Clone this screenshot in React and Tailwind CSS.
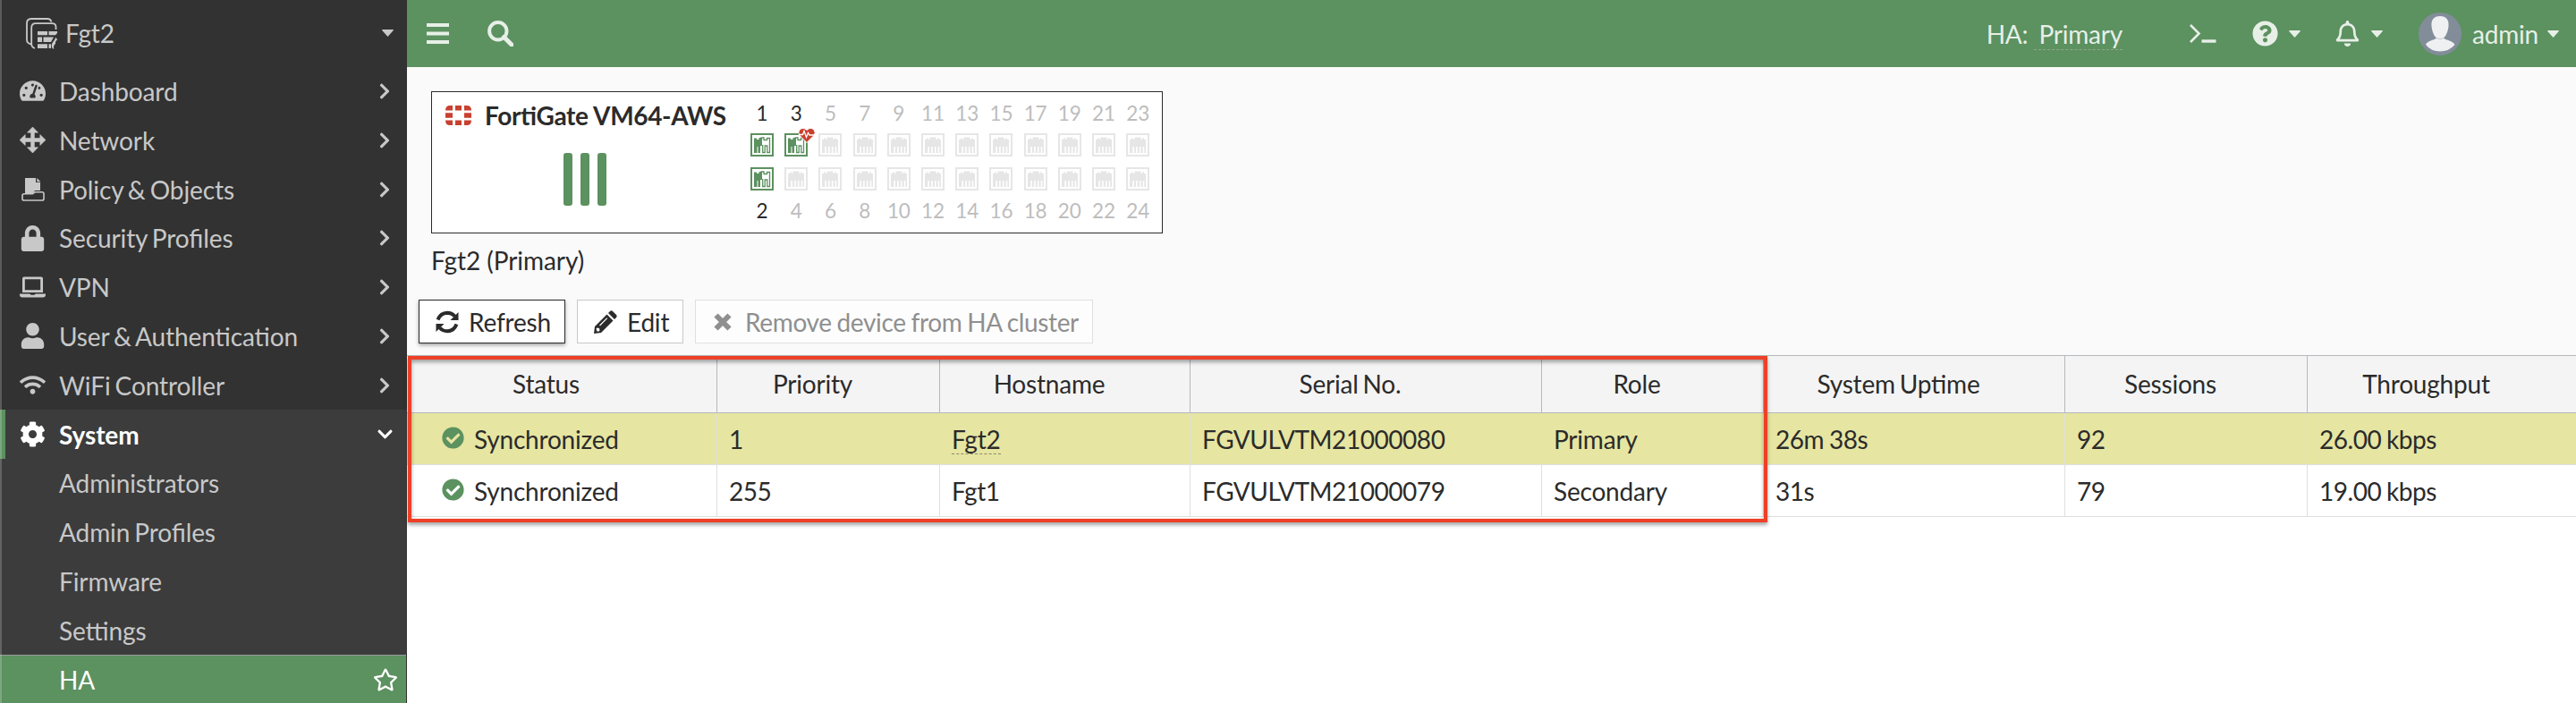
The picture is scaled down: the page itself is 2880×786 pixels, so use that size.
import { FaTachometerAlt, FaLock, FaUser, FaWifi, FaCog, FaRegStar, FaRegBell, FaQuestionCircle, FaCheckCircle, FaChevronRight, FaChevronDown } from "react-icons/fa";

const navItems = [
  { label: "Dashboard", icon: <FaTachometerAlt className="size-[29px]" /> },
  { label: "Network", icon: <MoveIcon /> },
  { label: "Policy & Objects", icon: <PolicyIcon /> },
  { label: "Security Profiles", icon: <FaLock className="size-[29px]" /> },
  { label: "VPN", icon: <LaptopIcon /> },
  { label: "User & Authentication", icon: <FaUser className="size-[29px]" /> },
  { label: "WiFi Controller", icon: <FaWifi className="size-[29px]" /> },
];

const subItems = ["Administrators", "Admin Profiles", "Firmware", "Settings"];

const odd = [1, 3, 5, 7, 9, 11, 13, 15, 17, 19, 21, 23];

function Caret({ className }) {
  return (
    <svg viewBox="0 0 13 8" className={className} fill="currentColor">
      <path d="M.5 0H12.500L13 .8 6.500 8 0 .8Z" />
    </svg>
  );
}

function MoveIcon() {
  return (
    <svg viewBox="0 0 29 29" className="size-[29px]" fill="currentColor">
      <path d="M14.5 0 20.5 6.2H16.400V12.600H22.800V8.500L29 14.500 22.800 20.500V16.400H16.400V22.800H20.500L14.500 29 8.500 22.800H12.600V16.400H6.200V20.500L0 14.500 6.200 8.500V12.600H12.600V6.200H8.500Z" stroke="currentColor" strokeLinejoin="round" strokeWidth="0.600" />
    </svg>
  );
}

function PolicyIcon() {
  return (
    <svg viewBox="0 0 26 26" className="h-[26px] w-[26px]">
      <path d="M4 0H16V5H21V14H15L13 17H4Z" fill="currentColor" />
      <path d="M17.300 0 21.500 4.200H17.300Z" fill="currentColor" />
      <path d="M3 17.800H12.500L15 15.800H23Q25 15.800 25 17.800V23.200Q25 25 23 25H3Q1 25 1 23.200V19.500Q1 17.800 3 17.800Z" fill="none" stroke="currentColor" strokeWidth="1.600" />
    </svg>
  );
}

function LaptopIcon() {
  return (
    <svg viewBox="0 0 29 24" className="h-[24px] w-[29px]" fill="currentColor">
      <path fillRule="evenodd" d="M5 .5H24Q26 .5 26 2.500V18H3V2.500Q3 .5 5 .5ZM5.800 3.300V15.300H23.200V3.300Z" />
      <path d="M0 19.500H11.500Q12 20.800 13 20.800H16Q17 20.800 17.500 19.500H29V20.500Q29 23.500 26 23.500H3Q0 23.500 0 20.500Z" />
    </svg>
  );
}

function DeviceIcon() {
  return (
    <svg viewBox="0 0 36 35" className="h-[35px] w-[36px]">
      <g fill="none" stroke="currentColor" strokeWidth="1.800">
        <path d="M6 29.500Q1 28.500 1 24.500V6Q1 1 6 1H24Q27.500 1 28.500 4.500" />
        <path d="M10 34Q6.200 33 6.200 29V11Q6.200 6.200 11 6.200H29Q33.500 6.200 33.500 10V13" />
      </g>
      <g fill="currentColor">
        <path d="M13 15H24V19.300H13ZM25.500 15H35V17L33 19.300H25.500ZM13 21.500H18V27H13ZM19.500 21.500H31L28 27H19.500ZM13 29.300H24V34H13ZM25.500 29.300H28V34H25.500Z" />
        <path d="M33.500 21.500Q33.500 23.500 35.500 24 32.500 26 33 29L31.500 30.500Q30.500 32.500 31.500 34.500H30Q27.500 31.500 29.800 27.500Q32 25 33.500 21.500Z" />
      </g>
    </svg>
  );
}

function FortinetLogo() {
  return (
    <svg viewBox="0 0 29 22" className="h-[22px] w-[29px]" fill="#c9402f">
      <path d="M8 0V5.500H0Q0 0 5 0ZM11 0H18V5.500H11ZM21 0H24Q29 0 29 5.500H21ZM0 8.200H8V13.800H0ZM21 8.200H29V13.800H21ZM0 16.500H8V22H5Q0 22 0 16.500ZM11 16.500H18V22H11ZM21 16.500H29Q29 22 24 22H21Z" />
    </svg>
  );
}

function Port({ up, heart }) {
  return (
    <div className="relative h-[26px] w-[26px]">
      {up ? (
        <svg viewBox="0 0 26 26" className="size-[26px]">
          <rect x="1" y="1" width="24" height="24" fill="#fff" stroke="#5c9160" strokeWidth="2" />
          <path d="M4 22V5.500H7V7H9.500V5H13V14H11V22H8.500V15H7.500V22Z" fill="#5c9160" />
          <path d="M11.500 5H15V7.500H18.500V5.500H21.500V21.500H18.800V14H16.200V21.500H13.700V13" fill="none" stroke="#5c9160" strokeWidth="1.300" />
        </svg>
      ) : (
        <svg viewBox="0 0 26 26" className="size-[26px]">
          <rect x="1" y="1" width="24" height="24" fill="#fff" stroke="#e6e6e6" strokeWidth="2" />
          <path d="M4 22V7H6V5.500H8V7H9.500V4.500H16.500V7H18V5.500H20V7H22V22H20.300V15H18.700V22H16.500V15H14.900V22H12.700V15H11.100V22H8.900V15H7.300V22H5.700V22Z" fill="#e6e6e6" />
        </svg>
      )}
      {heart && (
        <svg viewBox="0 0 20 17" className="absolute -top-[6px] left-[15px] h-[17px] w-[20px]">
          <path d="M10 16.500 2 8.500Q-.5 5 2 2 6-1.500 10 2.500 14-1.500 18 2 20.500 5 18 8.500Z" fill="#c9402f" stroke="#fff" strokeWidth="1" />
          <path d="M1 7.500H5.500L7 3.500 9.500 10.500 11.500 5.500 13 8H19" fill="none" stroke="#fff" strokeWidth="1.300" />
        </svg>
      )}
    </div>
  );
}

function RefreshIcon() {
  return (
    <svg viewBox="0 0 26 26" className="size-[26px]" fill="none" stroke="#2b2b2b" strokeWidth="4">
      <path d="M2.500 10.500Q5.500 3 13 2.800 18 2.800 21.500 6.500" />
      <path d="M23.500 15.500Q20.500 23 13 23.200 8 23.200 4.500 19.500" />
      <path d="M25.500 2V11H16.500ZM.5 24V15H9.500Z" fill="#2b2b2b" stroke="none" />
    </svg>
  );
}

function PencilIcon() {
  return (
    <svg viewBox="0 0 26 26" className="size-[26px]">
      <path d="M0 26 1 18 14.500 4.500 21.500 11.500 8 25ZM16 3 18 1Q19.500-.5 21 1L25 5Q26.300 6.500 25 8L23 10Z" fill="#2b2b2b" />
      <path d="M6.500 17 14.800 8.700" stroke="#fff" strokeWidth="1.200" fill="none" />
      <path d="M2.500 20.500 3.500 19.500 6 20 6.500 22.500 5.500 23.500 3.500 23.500Z" fill="#fff" />
    </svg>
  );
}

function CrossIcon() {
  return (
    <svg viewBox="0 0 20 20" className="size-[20px]" stroke="#8f8f8f" strokeWidth="6">
      <path d="M2.500 2.500 17.500 17.500M17.500 2.500 2.500 17.500" />
    </svg>
  );
}

const th = "flex h-[63px] items-center justify-center border-l border-[#b5b8bb] pr-[35px] pb-px first:border-l-0";
const td = "flex h-[57px] items-center border-l border-[#dfdfdf] pl-[13px] pt-px first:border-l-0";
const cols = "grid grid-cols-[346px_249px_280px_393px_248px_337px_271px_301px] w-[2425px]";

function Row({ selected, cells }) {
  return (
    <div className={selected ? cols + " border-b border-[#dfdfdf] bg-[#e6e5a1]" : cols + " border-b border-[#dfdfdf] bg-white"}>
      <div className="flex h-[57px] items-center pl-[39px] pt-px">
        <FaCheckCircle className="-mt-[3px] size-[25px] text-[#5c9160]" />
        <span className="ml-[11px]">Synchronized</span>
      </div>
      {cells.map((c, i) => (
        <div key={c} className={td}>
          {i === 1 && selected ? (
            <span className="relative">
              {c}
              <span className="absolute inset-x-0 bottom-0 border-b border-dashed border-[#8a8a70]" />
            </span>
          ) : (
            <span className={/\d/.test(c) ? "tracking-[-0.45px] [word-spacing:-1px]" : ""}>{c}</span>
          )}
        </div>
      ))}
    </div>
  );
}

export default function App() {
  return (
    <div className="flex h-[786px] w-[2880px] overflow-hidden bg-white font-['Lato',sans-serif] text-[28px] leading-[34px] tracking-[-0.2px] text-[#2b2b2b] [font-feature-settings:'liga'_1] [word-spacing:-2px]">
      <aside className="relative flex h-full w-[455px] shrink-0 flex-col bg-[#323232] tracking-[-0.1px] text-[#c8c8c8]">
        <div className="flex h-[74.6px] shrink-0 items-center pl-[29px] pr-[15px]">
          <DeviceIcon />
          <span className="ml-[8px] flex-1">Fgt2</span>
          <Caret className="h-[8px] w-[13px]" />
        </div>
        {navItems.map((n) => (
          <div key={n.label} className="flex h-[54.8px] shrink-0 items-center pl-[22px] pr-[15px]">
            <span className="flex w-[29px] justify-center">{n.icon}</span>
            <span className="ml-[15px] flex-1">{n.label}</span>
            <FaChevronRight className="size-[20px]" />
          </div>
        ))}
        <div className="flex h-[54.8px] shrink-0 items-center border-l-[6px] border-[#5c9160] bg-[#3c3c3c] pl-[16px] pr-[15px] font-bold text-white">
          <FaCog className="size-[29px]" />
          <span className="ml-[15px] flex-1">System</span>
          <FaChevronDown className="size-[19px]" />
        </div>
        {subItems.map((s) => (
          <div key={s} className="flex h-[54.8px] shrink-0 items-center bg-[#3c3c3c] pl-[66px]">{s}</div>
        ))}
        <div className="mr-px flex h-[55px] shrink-0 items-center border-t border-[#999] bg-[#5c9160] pl-[66px] pr-[9px] text-white">
          <span className="flex-1">HA</span>
          <FaRegStar className="size-[28px]" />
        </div>
        <div className="absolute inset-y-0 left-0 w-[2px] bg-white/20" />
      </aside>

      <main className="flex h-full w-[2425px] flex-col">
        <header className="flex h-[75px] shrink-0 items-center bg-[#5c9160] pl-[22px] text-[#e7efe7]">
          <svg viewBox="0 0 25 23" className="h-[23px] w-[25px]" fill="currentColor"><path d="M0 0H25V4H0ZM0 9.500H25V13.500H0ZM0 19H25V23H0Z" /></svg>
          <svg viewBox="0 0 29 29" className="ml-[43px] h-[29px] w-[29px]" fill="none" stroke="currentColor"><circle cx="11.800" cy="11.800" r="9.700" strokeWidth="4" /><path d="M18.500 18.500 27 27" strokeWidth="5" strokeLinecap="round" /></svg>
          <span className="ml-auto">HA:</span>
          <span className="relative ml-[7px] pl-[5px]">
            Primary
            <span className="absolute inset-x-0 -bottom-[1px] border-b border-dashed border-[#8fa88f]" />
          </span>
          <svg viewBox="0 0 30 21" className="ml-[75px] h-[21px] w-[30px]" fill="none" stroke="currentColor"><path d="M1 1 10.500 10.500 1 20" strokeWidth="2.600" /><path d="M13.500 19H29.500" strokeWidth="3.400" /></svg>
          <FaQuestionCircle className="ml-[40px] size-[29px]" />
          <Caret className="ml-[12px] h-[8px] w-[13px]" />
          <FaRegBell className="ml-[38px] size-[29px]" />
          <Caret className="ml-[12px] h-[8px] w-[13px]" />
          <svg viewBox="0 0 48 48" className="ml-[40px] size-[48px]">
            <circle cx="24" cy="24" r="24" fill="#828d99" />
            <path d="M24 4C31 4 34 8 33.500 15 33 22 30 27 28 28.500 31 31.500 38 31 40.500 36Q34 43.500 24 43.500T8 36C10 31 17 31.500 20 28.500 18 27 15 22 14.500 15 14 8 17 4 24 4Z" fill="#eef0f2" />
            <path d="M19.500 28Q24 31.500 28.500 28" fill="none" stroke="#c5cad0" strokeWidth="1" />
          </svg>
          <span className="ml-[12px]">admin</span>
          <Caret className="ml-[10px] mr-[19px] h-[8px] w-[13px]" />
        </header>

        <section className="h-[322px] shrink-0 bg-[#fafafa] pt-[27px]">
          <div className="ml-[27px] flex h-[159px] w-[818px] border border-[#2b2b2b] bg-white">
            <div className="w-[350px] pl-[15px] pt-[9px]">
              <div className="flex items-center">
                <FortinetLogo />
                <span className="ml-[15px] whitespace-nowrap font-bold tracking-[-0.35px] [word-spacing:0px]">FortiGate VM64-AWS</span>
              </div>
              <div className="mt-[25px] flex gap-[9px] pl-[132px]">
                {[0, 1, 2].map((i) => <div key={i} className="h-[59px] w-[10px] rounded-[3px] bg-[#5c9160]" />)}
              </div>
            </div>
            <div className="grid grid-cols-[repeat(12,38.2px)] pt-[11px] text-[22.500px] leading-[26px] tracking-[-0.1px]">
              {odd.map((n) => (
                <div key={n} className="flex flex-col items-center">
                  <span className={n < 4 ? "text-[#2b2b2b]" : "text-[#bdbdbd]"}>{n}</span>
                  <div className="mt-[9px]"><Port up={n < 4} heart={n === 3} /></div>
                  <div className="mt-[12px]"><Port up={n < 2} /></div>
                  <span className={n < 2 ? "mt-[10px] text-[#2b2b2b]" : "mt-[10px] text-[#bdbdbd]"}>{n + 1}</span>
                </div>
              ))}
            </div>
          </div>
          <div className="ml-[27px] mt-[13px] tracking-[-0.05px] [word-spacing:0px]">Fgt2 (Primary)</div>
          <div className="ml-[13px] mt-[27px] flex gap-[13px]">
            <div className="flex h-[49px] w-[164px] items-center border border-[#2b2b2b] bg-white pl-[18px] shadow-[0_2px_4px_rgba(0,0,0,0.35)]">
              <RefreshIcon /><span className="ml-[11px]">Refresh</span>
            </div>
            <div className="flex h-[49px] w-[119px] items-center border border-[#c8c8c8] bg-white pl-[18px]">
              <PencilIcon /><span className="ml-[11px]">Edit</span>
            </div>
            <div className="flex h-[49px] w-[445px] items-center border border-[#e0e0e0] bg-[#fdfdfd] pl-[20px] text-[#8f8f8f]">
              <CrossIcon /><span className="ml-[15px] whitespace-nowrap tracking-[-0.35px] [word-spacing:-1px]">Remove device from HA cluster</span>
            </div>
          </div>
        </section>

        <div className="relative">
          <div className={cols + " border-y border-[#b5b8bb] bg-[#f4f4f4]"}>
            {["Status", "Priority", "Hostname", "Serial No.", "Role", "System Uptime", "Sessions", "Throughput"].map((h) => <div key={h} className={th}>{h}</div>)}
          </div>
          <Row selected cells={["1", "Fgt2", "FGVULVTM21000080", "Primary", "26m 38s", "92", "26.00 kbps"]} />
          <Row cells={["255", "Fgt1", "FGVULVTM21000079", "Secondary", "31s", "79", "19.00 kbps"]} />
          <div className="absolute left-[1px] top-[1px] h-[186px] w-[1520px] border-4 border-[#ee4027] shadow-[0_3px_4px_rgba(0,0,0,0.35),inset_0_3px_4px_rgba(0,0,0,0.35)]" />
        </div>
      </main>
    </div>
  );
}
